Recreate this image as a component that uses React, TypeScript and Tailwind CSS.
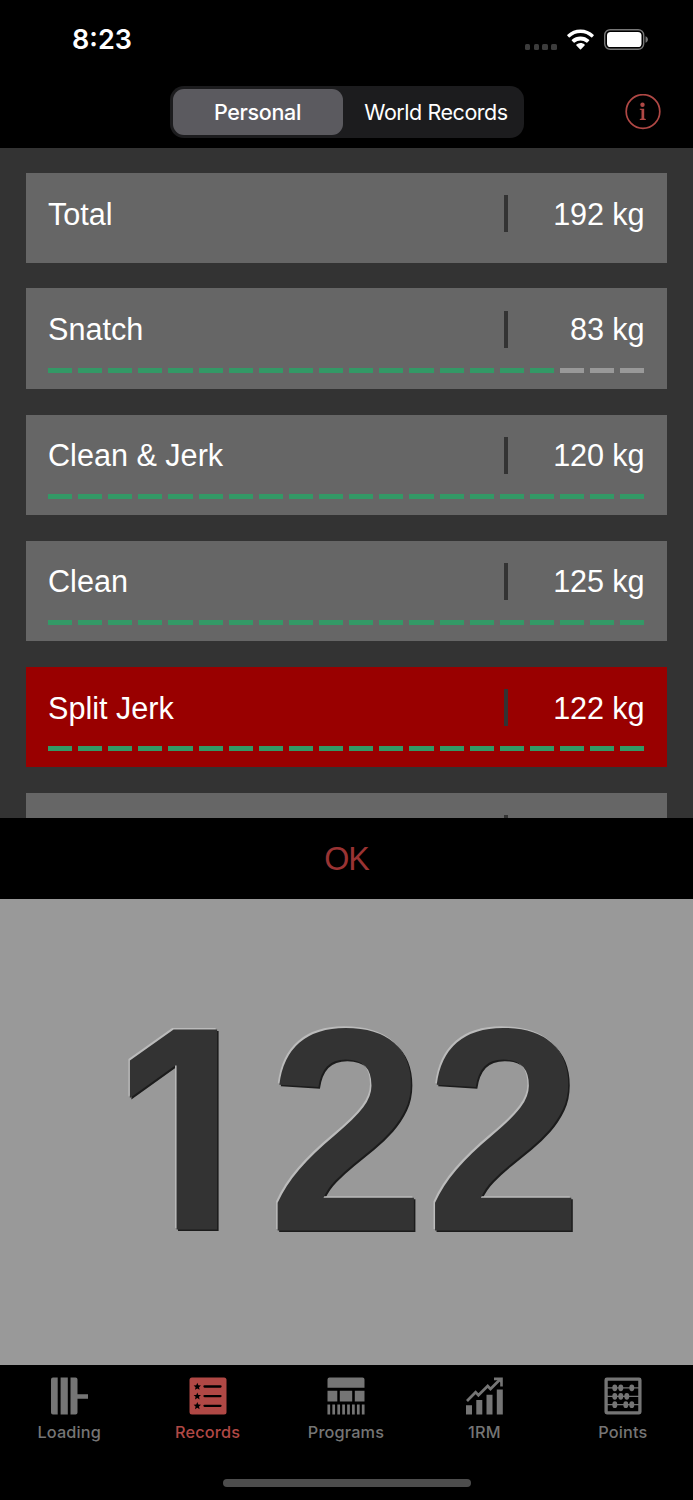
import type { ReactNode } from 'react';
import { clsx } from 'clsx';

interface LiftRecord {
  name: string;
  weight: number;
  progress?: number;
  isSelected?: boolean;
}

interface TabItem {
  label: string;
  icon: ReactNode;
  isActive?: boolean;
}

const SEGMENTS = 20;

const records: LiftRecord[] = [
  { name: 'Total', weight: 192 },
  { name: 'Snatch', weight: 83, progress: 17 },
  { name: 'Clean & Jerk', weight: 120, progress: 20 },
  { name: 'Clean', weight: 125, progress: 20 },
  { name: 'Split Jerk', weight: 122, progress: 20, isSelected: true }
];

const LoadingIcon = () => (
  <svg viewBox="0 0 38 38" className="size-[38px]" fill="currentColor">
    <path d="M3 .5h4.700v37H3a2 2 0 0 1-2-2v-33a2 2 0 0 1 2-2zM10.600.5h7.200v37h-7.200zM20.500.5h5a2 2 0 0 1 2 2v14.700H38v4.600H27.500v13.700a2 2 0 0 1-2 2h-5z" />
  </svg>
);

const star = 'l1.050 2.500 2.650.2-2 1.750.6 2.600-2.300-1.400-2.300 1.400.6-2.600-2-1.750 2.650-.2z';

const RecordsIcon = () => (
  <svg viewBox="0 0 38 38" className="size-[38px]">
    <rect x=".5" y=".5" width="37" height="37" rx="2.500" fill="currentColor" />
    <path d={`M8.300 5.800${star}M8.300 15.400${star}M8.300 25.100${star}`} fill="#000" />
    <path d="M15.500 9.500h16M15.500 19.100h16M15.500 28.800h16" stroke="#000" strokeWidth="2.300" strokeLinecap="round" />
  </svg>
);

const ProgramsIcon = () => (
  <svg viewBox="0 0 38 38" className="size-[38px]" fill="currentColor">
    <path d="M2.500.5h33a2 2 0 0 1 2 2v8.200H.5V2.500a2 2 0 0 1 2-2zM.5 13.800h9.800v10.700H.5zM12.800 13.800h12.400v10.700H12.800zM27.800 13.800h9.700v10.700h-9.700z" />
    <path
      d="M1.800 27.400v10.200M6.700 27.400v10.200M11.700 27.400v10.200M16.600 27.400v10.200M21.500 27.400v10.200M26.400 27.400v10.200M31.300 27.400v10.200M36.200 27.400v10.200"
      stroke="currentColor"
      strokeWidth="2.700"
    />
  </svg>
);

const ChartIcon = () => (
  <svg viewBox="0 0 38 38" className="size-[38px]" fill="currentColor">
    <path d="M1 28.300h6v9.300H1zM11.300 23h6v14.600h-6zM21.500 17.700h6v19.900h-6zM31.800 12.500h6v25.100h-6z" />
    <path d="M2 24 10.600 15.200 13.400 18.200 22.700 9 25.500 12 35.200 2.300" fill="none" stroke="currentColor" strokeWidth="2.700" />
    <path d="M29 .5h8.800v9h-2.600V3.200H29z" />
    <path d="M32 2h4.500v4.500z" />
  </svg>
);

const AbacusIcon = () => (
  <svg viewBox="0 0 38 38" className="size-[38px]" fill="currentColor">
    <rect x="2.100" y="2.100" width="33.800" height="33.800" rx=".8" fill="none" stroke="currentColor" strokeWidth="3.300" />
    <path d="M3 10.800h32M3 19.300h32M3 27.700h32" stroke="currentColor" strokeWidth="1.300" />
    {[
      [10.8, 10.8],
      [16.8, 10.8],
      [27.8, 10.8],
      [10.8, 19.3],
      [16.8, 19.3],
      [22.8, 19.3],
      [10.8, 27.7],
      [21.8, 27.7],
      [27.8, 27.7]
    ].map(([x, y]) => (
      <ellipse key={`${x}-${y}`} cx={x} cy={y} rx="2.500" ry="3.400" />
    ))}
  </svg>
);

const tabs: TabItem[] = [
  { label: 'Loading', icon: <LoadingIcon /> },
  { label: 'Records', icon: <RecordsIcon />, isActive: true },
  { label: 'Programs', icon: <ProgramsIcon /> },
  { label: '1RM', icon: <ChartIcon /> },
  { label: 'Points', icon: <AbacusIcon /> }
];

const StatusBar = () => (
  <div className="flex h-[86px] items-start justify-between pt-[26px] pr-[44px] pl-[72px] text-white">
    <span className="text-[27px] leading-7 font-semibold">8:23</span>
    <div className="flex items-center pt-[3px]">
      <div className="mt-[15px] flex gap-[3.2px]">
        {[0, 1, 2, 3].map((dot) => (
          <span key={dot} className="size-[5.5px] rounded-[1.5px] bg-[#3c3c3c]" />
        ))}
      </div>
      <svg viewBox="0 0 27 21" className="ml-[10.5px] h-[21px] w-[27px]" fill="#fff">
        <path d="M13.500.5c5.100 0 9.700 2 13.100 5.200.3.3.3.8 0 1.100l-1.400 1.500c-.3.3-.7.3-1 0a15.600 15.600 0 0 0-21.400 0c-.3.3-.7.3-1 0L.4 6.800a.8.8 0 0 1 0-1.100A19 19 0 0 1 13.500.5z" />
        <path d="M13.500 7.400c3.300 0 6.300 1.200 8.600 3.300.3.3.3.8 0 1.100L20.300 13.600c-.3.3-.7.3-1 0a8.800 8.800 0 0 0-11.600 0c-.3.3-.7.3-1 0L4.900 11.800a.8.8 0 0 1 0-1.100 12.700 12.700 0 0 1 8.600-3.300z" />
        <path d="M13.500 14.100c1.600 0 3 .5 4.100 1.500.3.3.3.7 0 1l-3.600 3.600c-.3.3-.7.3-1 0l-3.600-3.600a.7.7 0 0 1 0-1 6 6 0 0 1 4.100-1.500z" />
      </svg>
      <svg viewBox="0 0 45 21" className="ml-[10px] h-[21px] w-[45px]">
        <rect x=".7" y=".7" width="39" height="19.600" rx="5.500" fill="none" stroke="#777" strokeWidth="1.400" />
        <rect x="3" y="3" width="34.500" height="15" rx="3.600" fill="#fff" />
        <path d="M41.500 7.200c1.500.6 2.400 1.800 2.400 3.300s-.9 2.700-2.400 3.300z" fill="#777" />
      </svg>
    </div>
  </div>
);

const Header = () => (
  <header className="h-[147.5px] shrink-0 bg-black font-['Inter',sans-serif]">
    <StatusBar />
    <div className="grid grid-cols-[1fr_354px_1fr] items-center">
      <div className="col-start-2 grid h-[51.5px] grid-cols-[170px_1fr] gap-[3px] rounded-[14px] bg-[#1c1c1e] p-[3px] text-[21.5px] text-white">
        <button className="rounded-[11px] bg-[#5b5a5f] font-medium tracking-[-0.35px]">Personal</button>
        <button className="pl-[6px] tracking-[-0.45px] whitespace-nowrap">World Records</button>
      </div>
      <button aria-label="Info" className="mr-[32.5px] justify-self-end text-[#b04845]">
        <svg viewBox="0 0 36 36" className="size-[36px]">
          <circle cx="18" cy="17.500" r="16.800" fill="none" stroke="currentColor" strokeWidth="1.700" />
          <circle cx="17.500" cy="10.700" r="2.200" fill="currentColor" />
          <path d="M14.800 14.800h4.400v9.700l1.600.6v1h-6v-1l1.700-.6v-8.500l-1.700-.3z" fill="currentColor" />
        </svg>
      </button>
    </div>
  </header>
);

const ProgressBar = ({ value }: { value: number }) => (
  <div className="mt-[20.3px] flex gap-[6.1px]">
    {Array.from({ length: SEGMENTS }, (_, i) => (
      <span key={i} className={clsx('h-[5px] flex-1', i < value ? 'bg-[#339966]' : 'bg-[#999999]')} />
    ))}
  </div>
);

const RecordCard = ({ record }: { record: LiftRecord }) => (
  <li
    className={clsx(
      'shrink-0 pt-[22.3px] pr-[22.9px] pl-[22.3px]',
      record.progress === undefined ? 'h-[90px]' : 'h-[100.5px]',
      record.isSelected ? 'bg-[#990000]' : 'bg-[#666666]'
    )}
  >
    <div className="flex h-[37px] items-center text-[30.6px] leading-[38px] text-white">
      <span className="flex-1">{record.name}</span>
      <span className="h-full w-[4px] bg-[#333333]" />
      <span className="w-[136.2px] text-right tracking-[-0.1px]">{record.weight} kg</span>
    </div>
    {record.progress !== undefined && <ProgressBar value={record.progress} />}
  </li>
);

const TabBar = () => (
  <nav className="h-[135px] shrink-0 bg-black font-['Inter',sans-serif]">
    <ul className="grid h-[114px] w-[692px] grid-cols-5">
      {tabs.map((tab) => (
        <li
          key={tab.label}
          className={clsx('flex flex-col items-center pt-[12px]', tab.isActive ? 'text-[#b04845]' : 'text-[#757575]')}
        >
          {tab.icon}
          <span className="mt-[7px] text-[16.3px] leading-[21px] font-medium tracking-[0.15px]">{tab.label}</span>
        </li>
      ))}
    </ul>
    <div className="mx-auto h-[8px] w-[248px] rounded-full bg-[#4d4d4d]" />
  </nav>
);

const App = () => (
  <div className="flex h-[1500px] w-[693px] flex-col overflow-hidden bg-black font-['Liberation_Sans',Arial,sans-serif]">
    <Header />

    <main className="flex min-h-0 flex-1 flex-col">
      <ul className="flex h-[670.5px] shrink-0 flex-col gap-[25.6px] overflow-hidden bg-[#333333] px-[25.7px] pt-[25.4px]">
        {records.map((record) => (
          <RecordCard key={record.name} record={record} />
        ))}
        {/* next record, cut off by the editor below */}
        <li className="h-[100.5px] shrink-0 bg-[#666666] pt-[22.3px] pl-[478.5px]">
          <div className="h-[37px] w-[4px] bg-[#333333]" />
        </li>
      </ul>

      <button className="h-[81px] shrink-0 bg-black text-[34px] tracking-[-1px] text-[#993333]">
        <span className="inline-block scale-x-95">OK</span>
      </button>

      <div className="flex flex-1 items-center justify-center bg-[#999999]">
        <div className="flex items-center leading-none font-bold text-[#333333] [text-shadow:-1.5px_-1.5px_0_#bbbbbb,1.5px_1.5px_0_#1c1c1c]">
          {/* Inter has the footless numeral one */}
          <span className="flex w-[157.5px] -translate-x-[12.5px] -translate-y-[2.5px] scale-x-[0.99] justify-center font-['Inter',sans-serif] text-[275px]">
            1
          </span>
          <span className="-translate-y-[2px] scale-y-[1.025] text-[283px]">22</span>
        </div>
      </div>
    </main>

    <TabBar />
  </div>
);

export default App;
